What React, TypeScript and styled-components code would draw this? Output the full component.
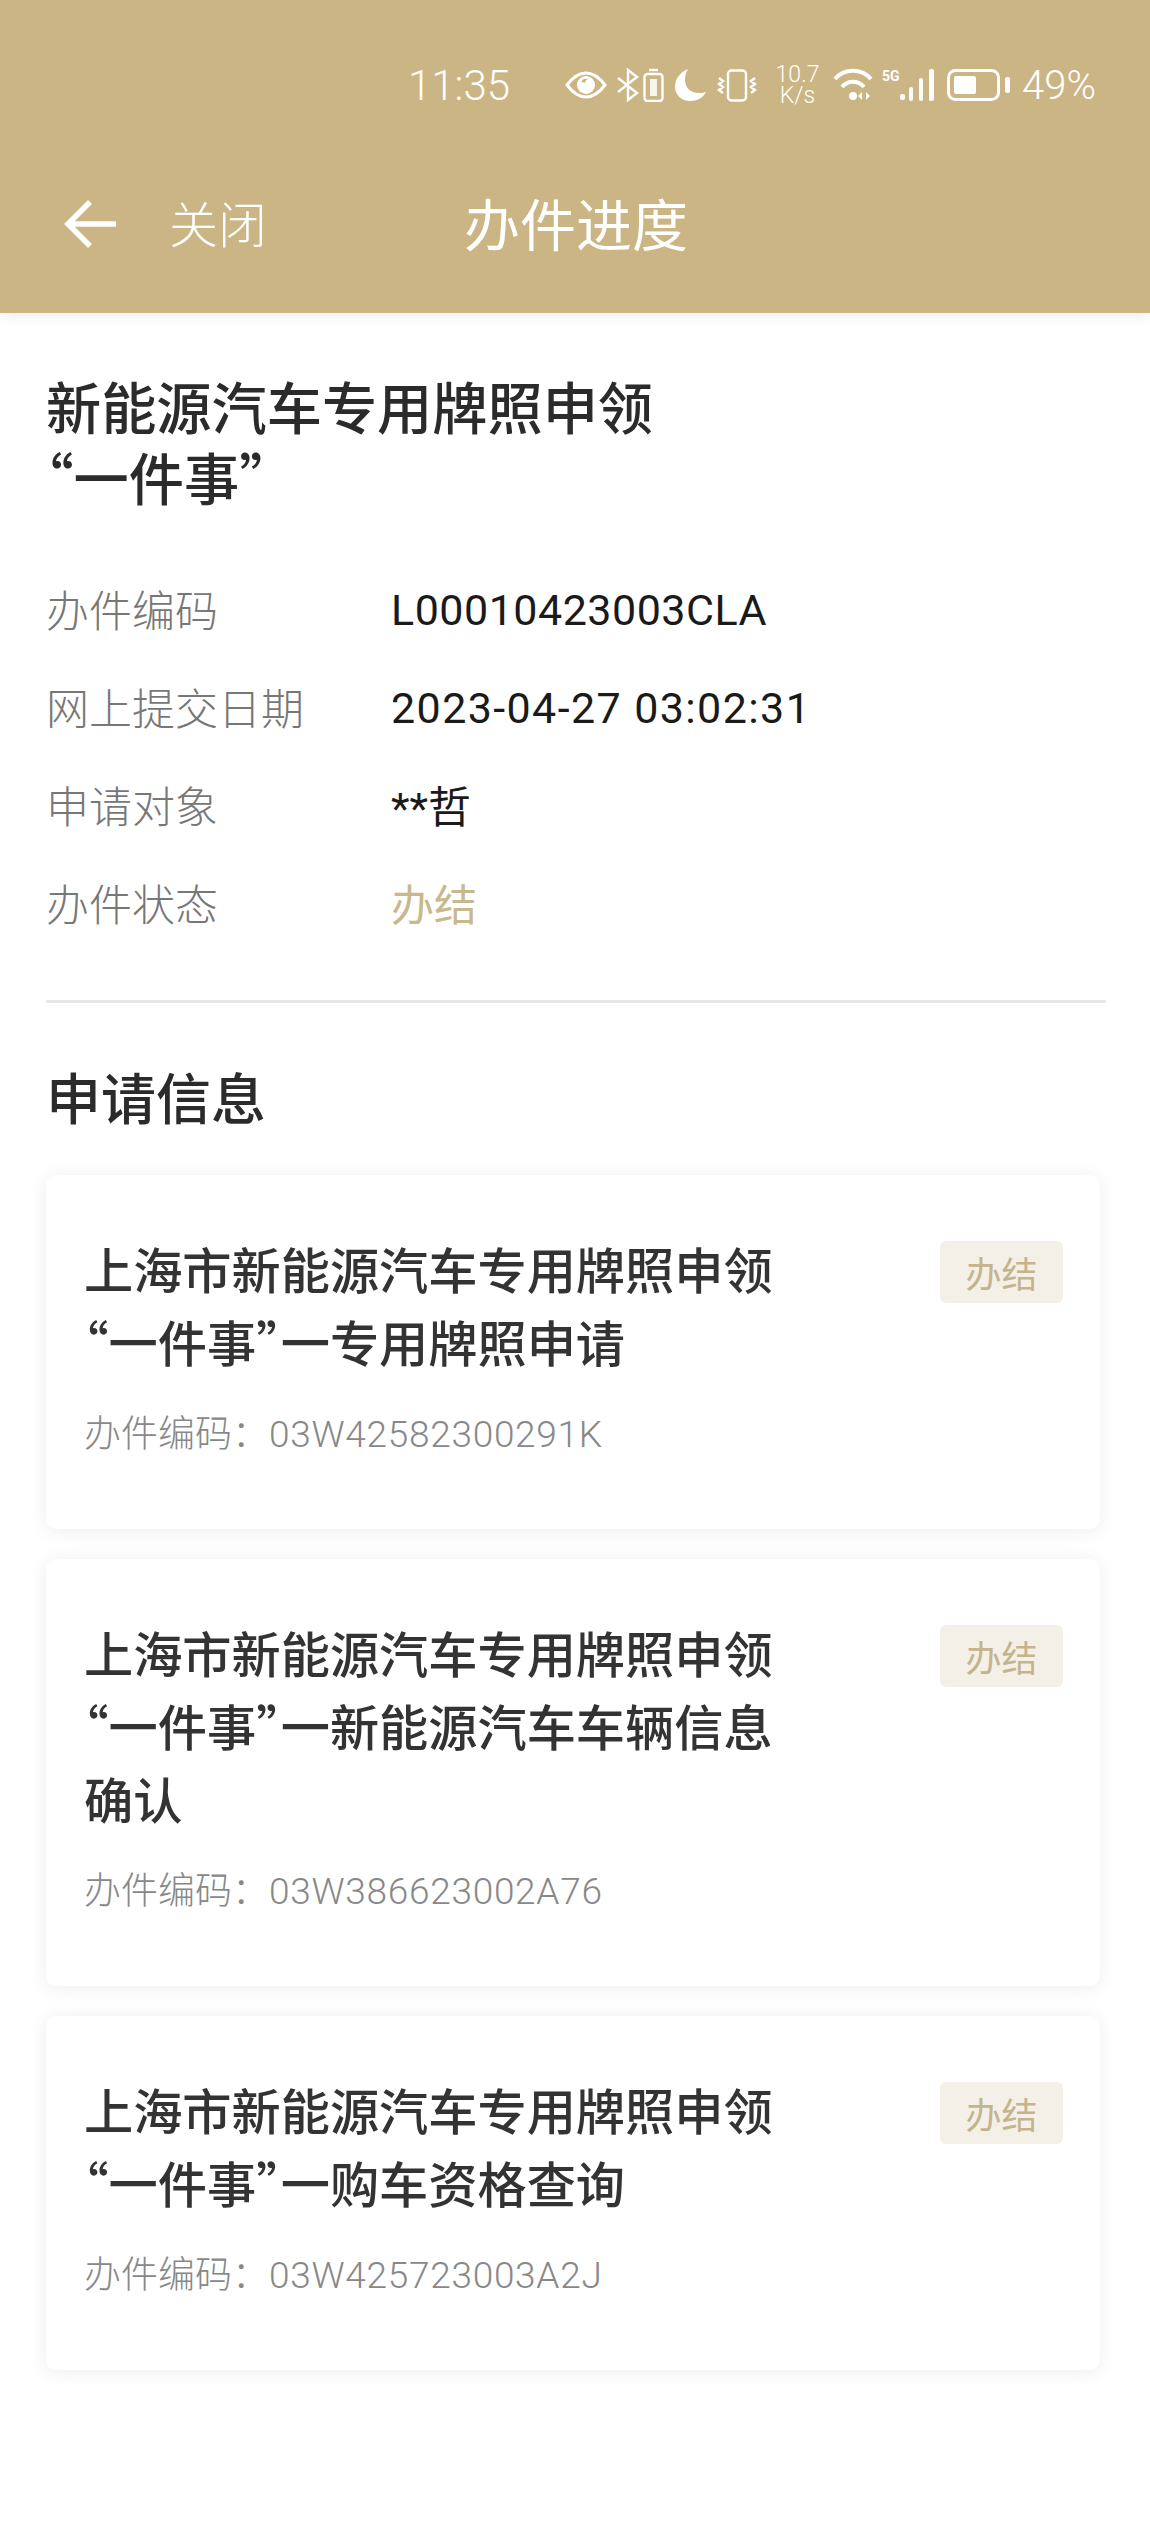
import React from "react";
import styled, { createGlobalStyle } from "styled-components";

type Task = {
  lines: string[];
  code: string;
};

const taskList: Task[] = [
  {
    lines: ["上海市新能源汽车专用牌照申领", "“一件事”一专用牌照申请"],
    code: "03W42582300291K",
  },
  {
    lines: ["上海市新能源汽车专用牌照申领", "“一件事”一新能源汽车车辆信息", "确认"],
    code: "03W386623002A76",
  },
  {
    lines: ["上海市新能源汽车专用牌照申领", "“一件事”一购车资格查询"],
    code: "03W425723003A2J",
  },
];

const GOLD = "#cbb584";

const StatusIcons: React.FC = () => (
  <IconRow>
    <Glyph $left={55} width="42" height="28" viewBox="0 0 42 28" fill="none">
      <path d="M2 14C8 6 14 2 21 2s13 4 19 12c-6 8-12 12-19 12S8 22 2 14z" stroke="#fff" strokeWidth="3" />
      <circle cx="21" cy="14" r="9" fill="#fff" />
      <path d="M16 11c1-3 4-4 7-3-2 1-3 2-3 4-2-1-3-1-4-1z" fill={GOLD} />
    </Glyph>
    <Glyph $left={10} width="22" height="34" viewBox="0 0 22 34" fill="none" stroke="#fff" strokeWidth="2.4">
      <path d="M1 10l9 7-9 7" />
      <path d="M11 2l9 7-9 7zM11 18l9 7-9 7z" />
    </Glyph>
    <Glyph $left={4} width="21" height="34" viewBox="0 0 21 34" fill="none" stroke="#fff" strokeWidth="2.4">
      <rect x="1.5" y="6" width="18" height="27" rx="3" />
      <path d="M6 2h9" />
      <rect x="7" y="11" width="7" height="17" stroke="none" fill="#fff" opacity="0.85" />
    </Glyph>
    <Glyph $left={11} width="31" height="34" viewBox="0 0 31 34" fill="#fff">
      <path d="M13 1C5 4 0 11 0 19c0 8 7 14 15 14 7 0 13-3 16-9-3 1-5 1-7 1-9 0-14-6-14-13 0-4 1-8 3-11z" />
    </Glyph>
    <Glyph $left={11} width="40" height="33" viewBox="0 0 40 33" fill="none" stroke="#fff" strokeWidth="2.4">
      <rect x="11" y="1.5" width="18" height="30" rx="3.5" />
      <path d="M2 9l4 3-4 3 4 3-4 3 4 3M38 9l-4 3 4 3-4 3 4 3-4 3" />
    </Glyph>
    <NetSpeed>
      <span>10.7</span>
      <span>K/s</span>
    </NetSpeed>
    <Glyph $left={13} width="40" height="34" viewBox="0 0 40 34" fill="none" stroke="#fff" strokeWidth="4">
      <path d="M2 11c9-11 27-11 36 0" />
      <path d="M9 19c6-7 16-7 22 0" />
      <circle cx="20" cy="28" r="4" fill="#fff" stroke="none" />
      <path d="M29 24l-4 4 4 4zM33 24l4 4-4 4z" fill="#fff" stroke="none" />
    </Glyph>
    <SignalWrap>
      <FiveG>5G</FiveG>
      <svg width="35" height="32" viewBox="0 0 35 32" fill="#fff">
        <rect x="0" y="25" width="5" height="6" rx="2" />
        <rect x="9" y="18" width="4" height="14" rx="2" />
        <rect x="19" y="9" width="4" height="23" rx="2" />
        <rect x="29" y="0" width="5" height="32" rx="2" />
      </svg>
    </SignalWrap>
    <Glyph $left={12} width="63" height="32" viewBox="0 0 63 32" fill="none">
      <rect x="1.5" y="1.5" width="50" height="29" rx="7" stroke="#fff" strokeWidth="3" />
      <rect x="7" y="7" width="22" height="18" rx="2" fill="#fff" />
      <rect x="58" y="8" width="5" height="16" rx="2" fill="#fff" />
    </Glyph>
    <StatusText>49%</StatusText>
  </IconRow>
);

const App: React.FC = () => {
  return (
    <Page>
      <GlobalStyle />
      <Header>
        <StatusBar>
          <Clock>11:35</Clock>
          <StatusIcons />
        </StatusBar>
        <NavBar>
          <svg width="52" height="50" viewBox="0 0 52 50" fill="none" stroke="#fff" strokeWidth="5.5">
            <path d="M26 3L4 25l22 22M4 25h48" />
          </svg>
          <CloseLabel>关闭</CloseLabel>
          <PageTitle>办件进度</PageTitle>
        </NavBar>
      </Header>
      <Main>
        <Heading>
          新能源汽车专用牌照申领
          <br />
          “一件事”
        </Heading>
        <InfoList>
          <InfoRow>
            <InfoLabel>办件编码</InfoLabel>
            <InfoValue $track={0.5}>L00010423003CLA</InfoValue>
          </InfoRow>
          <InfoRow>
            <InfoLabel>网上提交日期</InfoLabel>
            <InfoValue $track={1.4}>2023-04-27 03:02:31</InfoValue>
          </InfoRow>
          <InfoRow>
            <InfoLabel>申请对象</InfoLabel>
            <InfoValue>**哲</InfoValue>
          </InfoRow>
          <InfoRow>
            <InfoLabel>办件状态</InfoLabel>
            <InfoValue $gold>办结</InfoValue>
          </InfoRow>
        </InfoList>
        <Divider />
        <SectionTitle>申请信息</SectionTitle>
        <CardList>
          {taskList.map((task) => (
            <Card key={task.code}>
              <CardTop>
                <CardTitle>
                  {task.lines.map((line) => (
                    <div key={line}>{line}</div>
                  ))}
                </CardTitle>
                <Badge>办结</Badge>
              </CardTop>
              <CardCode>
                办件编码：<CodeNumber>{task.code}</CodeNumber>
              </CardCode>
            </Card>
          ))}
        </CardList>
      </Main>
    </Page>
  );
};

const GlobalStyle = createGlobalStyle`
  html, body {
    margin: 0;
    padding: 0;
    background: #fff;
  }
`;

const Page = styled.div`
  width: 1150px;
  height: 2530px;
  overflow: hidden;
  font-family: Roboto, "Noto Sans CJK SC", sans-serif;
  background: #fff;
`;

const Header = styled.header`
  height: 313px;
  background: ${GOLD};
  box-shadow: 0 2px 14px rgba(0, 0, 0, 0.08);
  color: #fff;
`;

const StatusBar = styled.div`
  display: flex;
  align-items: center;
  height: 170px;
  padding-left: 408px;
`;

const Clock = styled.span`
  width: 102px;
  font-size: 42px;
  font-weight: 300;
`;

const IconRow = styled.div`
  display: flex;
  align-items: center;
`;

const Glyph = styled.svg<{ $left: number }>`
  flex: none;
  margin-left: ${(props) => props.$left}px;
`;

const NetSpeed = styled.div`
  display: flex;
  flex-direction: column;
  align-items: center;
  width: 45px;
  margin-left: 18px;
  font-size: 23px;
  line-height: 21px;
  font-weight: 300;
`;

const SignalWrap = styled.div`
  position: relative;
  display: flex;
  justify-content: flex-end;
  width: 53px;
  height: 32px;
  margin-left: 9px;
`;

const FiveG = styled.span`
  position: absolute;
  left: 0;
  top: 0;
  font-size: 14px;
  line-height: 14px;
  font-weight: 700;
`;

const StatusText = styled.span`
  margin-left: 12px;
  font-size: 40px;
  font-weight: 300;
`;

const NavBar = styled.div`
  display: flex;
  align-items: center;
  height: 108px;
  padding-left: 64px;
`;

const CloseLabel = styled.span`
  width: 98px;
  margin: 0 0 5px 53px;
  font-size: 49px;
  font-weight: 300;
  white-space: nowrap;
`;

const PageTitle = styled.span`
  margin: 0 0 5px 197px;
  font-size: 56px;
  font-weight: 400;
`;

const Main = styled.main`
  padding: 57px 46px 0;
`;

const Heading = styled.h1`
  margin: 0;
  font-family: "Noto Sans CJK SC", sans-serif;
  font-feature-settings: "halt";
  font-size: 55.2px;
  line-height: 71px;
  font-weight: 500;
  color: #2b2b2b;
`;

const InfoList = styled.div`
  display: flex;
  flex-direction: column;
  margin-top: 47px;
`;

const InfoRow = styled.div`
  display: flex;
  align-items: center;
  height: 98px;
  font-size: 43px;
`;

const InfoLabel = styled.span`
  width: 345px;
  font-weight: 300;
  color: #777;
`;

const InfoValue = styled.span<{ $gold?: boolean; $track?: number }>`
  padding-top: ${(props) => (props.$track ? 4 : 0)}px;
  color: ${(props) => (props.$gold ? "#c8b88e" : "#1a1a1a")};
  letter-spacing: ${(props) => props.$track ?? 0}px;
`;

const Divider = styled.div`
  width: 1060px;
  height: 3px;
  margin-top: 49px;
  background: #e6e6e6;
`;

const SectionTitle = styled.h2`
  margin: 62px 0 0;
  font-size: 55px;
  line-height: 70px;
  font-weight: 500;
  color: #2b2b2b;
`;

const CardList = styled.div`
  display: flex;
  flex-direction: column;
  gap: 30px;
  margin-top: 40px;
`;

const Card = styled.div`
  width: 1054px;
  box-sizing: border-box;
  padding: 56px 37px 69px 38px;
  background: #fff;
  border-radius: 10px;
  box-shadow: 0 2px 20px rgba(0, 0, 0, 0.07);
`;

const CardTop = styled.div`
  display: flex;
  justify-content: space-between;
  align-items: flex-start;
`;

const CardTitle = styled.div`
  font-family: "Noto Sans CJK SC", sans-serif;
  font-feature-settings: "halt";
  font-size: 49.2px;
  line-height: 73px;
  font-weight: 500;
  color: #333;
`;

const Badge = styled.div`
  display: flex;
  align-items: center;
  justify-content: center;
  width: 123px;
  height: 62px;
  margin-top: 10px;
  border-radius: 6px;
  background: #f5f0e7;
  font-size: 36px;
  color: #c4b48e;
`;

const CardCode = styled.div`
  margin-top: 33px;
  font-size: 37px;
  line-height: 50px;
  font-weight: 300;
  color: #888;
`;

const CodeNumber = styled.span`
  letter-spacing: 0.7px;
`;

export default App;
